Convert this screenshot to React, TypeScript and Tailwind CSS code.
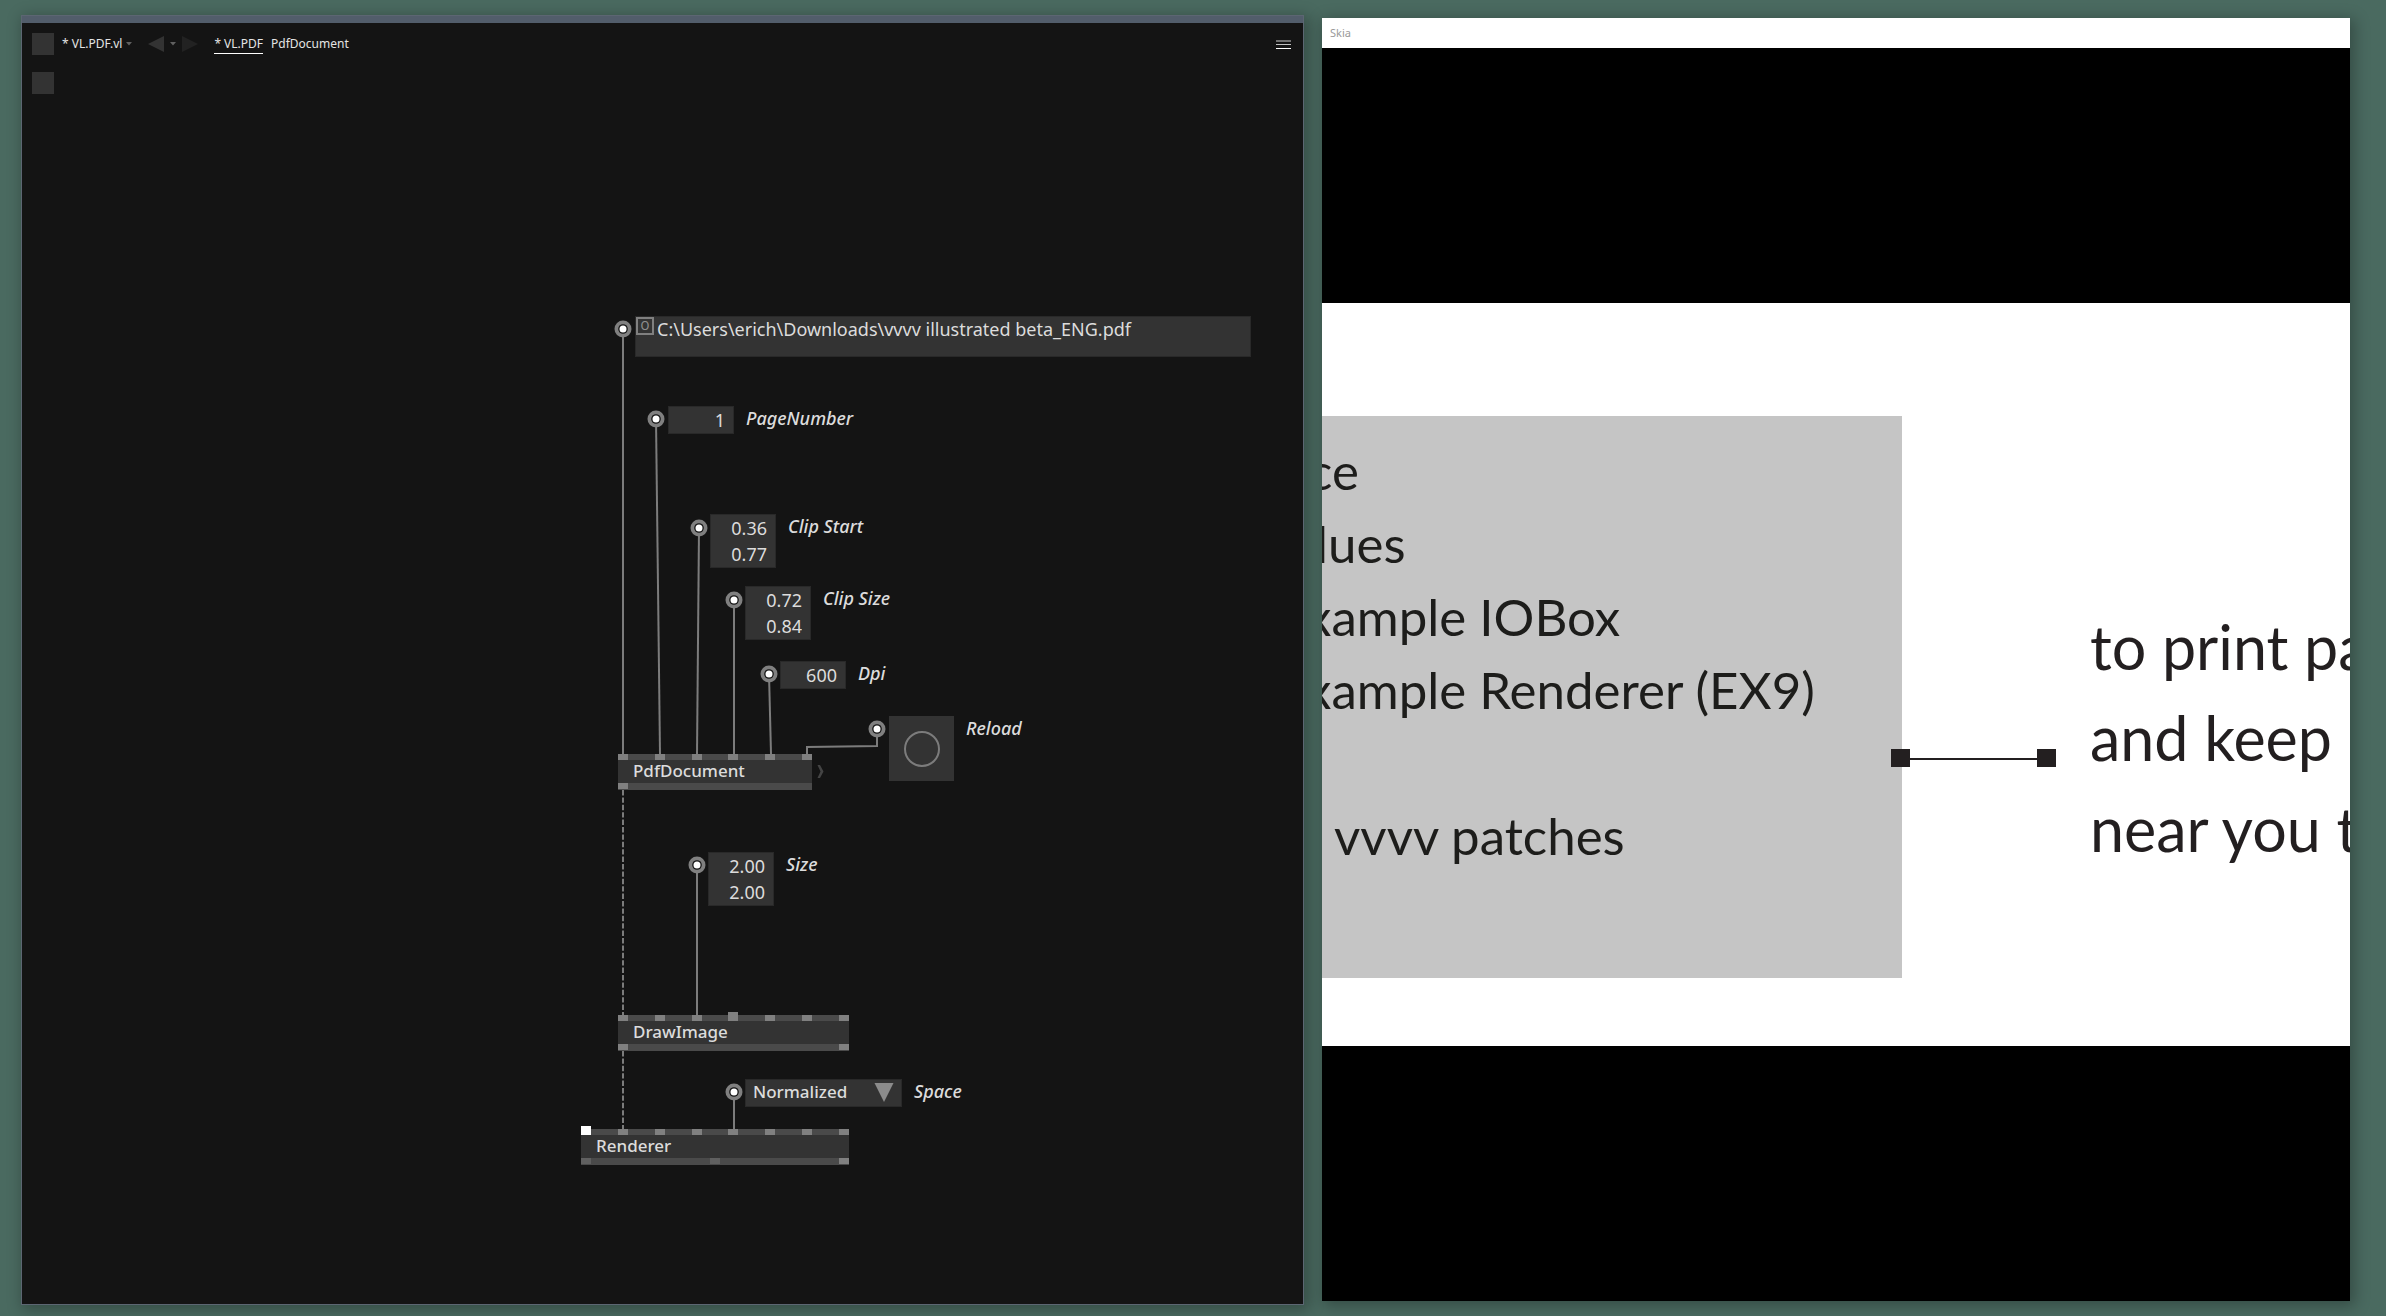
import type { ReactNode } from 'react';

type Point = { x: number; y: number };

const valueBoxes = [
  { id: 'page-number', label: 'PageNumber', x: 646, y: 306, values: ['1'] },
  { id: 'clip-start', label: 'Clip Start', x: 688, y: 414, values: ['0.36', '0.77'] },
  { id: 'clip-size', label: 'Clip Size', x: 723, y: 486, values: ['0.72', '0.84'] },
  { id: 'dpi', label: 'Dpi', x: 758, y: 561, values: ['600'] },
  { id: 'size', label: 'Size', x: 686, y: 752, values: ['2.00', '2.00'] },
];

type PinKind = 'normal' | 'raised' | 'active' | 'dim';

const nodes: { name: string; x: number; y: number; width: number; inputs: PinKind[]; outputs: PinKind[] }[] = [
  {
    name: 'PdfDocument',
    x: 596,
    y: 654,
    width: 194,
    inputs: ['normal', 'normal', 'normal', 'normal', 'normal', 'normal'],
    outputs: ['normal'],
  },
  {
    name: 'DrawImage',
    x: 596,
    y: 915,
    width: 231,
    inputs: ['normal', 'normal', 'normal', 'raised', 'normal', 'normal', 'normal'],
    outputs: ['normal', 'normal'],
  },
  {
    name: 'Renderer',
    x: 559,
    y: 1029,
    width: 268,
    inputs: ['active', 'normal', 'normal', 'normal', 'normal', 'normal', 'normal', 'normal'],
    outputs: ['dim', 'dim', 'normal'],
  },
];

const links = [
  '601,229 601,654',
  '634,319 638,654',
  '677,428 675,654',
  '712,500 712,654',
  '747,574 749,654',
  '855,629 855,646 785,647 785,654',
  '675,765 675,915',
  '712,992 712,1029',
];

const dataLinks = ['601,690 601,915', '601,951 601,1029'];

const padCenters: Point[] = [
  { x: 601, y: 229 },
  { x: 634, y: 319 },
  { x: 677, y: 428 },
  { x: 712, y: 500 },
  { x: 747, y: 574 },
  { x: 855, y: 629 },
  { x: 675, y: 765 },
  { x: 712, y: 992 },
];

const pinStyles: Record<PinKind, string> = {
  normal: 'h-1.5 w-2.5 bg-[#808080]',
  raised: 'h-[9px] w-2.5 bg-[#808080]',
  active: 'h-[9px] w-2.5 bg-white',
  dim: 'h-1.5 w-2.5 bg-[#606060]',
};

function Wires() {
  return (
    <svg className="pointer-events-none absolute inset-0 size-full" aria-hidden="true">
      <g fill="none" stroke="#7c7c7c" strokeWidth="2">
        {links.map((points) => (
          <polyline key={points} points={points} />
        ))}
        {dataLinks.map((points) => (
          <polyline key={points} points={points} strokeDasharray="5.4 2" />
        ))}
      </g>
      {padCenters.map(({ x, y }) => (
        <g key={`${x}-${y}`}>
          <circle cx={x} cy={y} r="8.5" fill="#808080" />
          <circle cx={x} cy={y} r="4.8" fill="#141414" />
          <circle cx={x} cy={y} r="3.5" fill="#ffffff" />
        </g>
      ))}
      <path d="M795.5 665H798L801.500 671.500L798 678H795.500L798.500 671.500Z" fill="#444" />
    </svg>
  );
}

function Placed({ x, y, children }: Point & { children: ReactNode }) {
  return (
    <div className="absolute flex items-start" style={{ left: x, top: y }}>
      {children}
    </div>
  );
}

function Caption({ htmlFor, children }: { htmlFor: string; children: ReactNode }) {
  return (
    <label htmlFor={htmlFor} className="ml-3 text-lg leading-[24px] font-medium whitespace-nowrap italic">
      {children}
    </label>
  );
}

function ValueBox({ id, label, x, y, values }: (typeof valueBoxes)[number]) {
  return (
    <Placed x={x} y={y}>
      <div className="flex w-[66px] flex-col border border-[#292929] bg-[#333]">
        {values.map((value, i) => (
          <input
            key={i}
            id={i === 0 ? id : `${id}-${i}`}
            aria-label={`${label} ${i + 1}`}
            defaultValue={value}
            className="h-[26px] w-full bg-transparent pr-2 text-right text-lg leading-[26px] outline-none"
          />
        ))}
      </div>
      <Caption htmlFor={id}>{label}</Caption>
    </Placed>
  );
}

function Node({ name, x, y, width, inputs, outputs }: (typeof nodes)[number]) {
  return (
    <div className="absolute bg-[#333]" style={{ left: x, top: y, width }}>
      <div className="flex h-1.5 items-end justify-between bg-[#4a4a4a]">
        {inputs.map((kind, i) => (
          <span key={i} className={pinStyles[kind]} />
        ))}
      </div>
      <div className="px-[15px] pb-0.5 text-[17px] leading-[21px] font-medium">{name}</div>
      <div className="flex h-[7px] justify-between bg-[#4a4a4a]">
        {outputs.map((kind, i) => (
          <span key={i} className={pinStyles[kind]} />
        ))}
      </div>
    </div>
  );
}

function Patch() {
  return (
    <main className="relative flex-1 overflow-hidden">
      <Wires />
      <div className="absolute top-[216px] left-[613px] flex h-[41px] w-[616px] items-start border border-[#292929] bg-[#333]">
        <button
          className="size-[18px] shrink-0 border-2 border-[#808080] text-center font-[Roboto,sans-serif] text-[13px] leading-[14px] text-[#909090]"
          aria-label="Open file"
        >
          O
        </button>
        <input
          aria-label="File path"
          defaultValue="C:\Users\erich\Downloads\vvvv illustrated beta_ENG.pdf"
          className="ml-[3px] h-[24px] flex-1 bg-transparent text-lg leading-[24px] outline-none"
        />
      </div>
      {valueBoxes.map((box) => (
        <ValueBox key={box.id} {...box} />
      ))}
      <Placed x={867} y={616}>
        <button id="reload" className="flex size-[65px] items-center justify-center bg-[#333]">
          <span className="size-9 rounded-full border-2 border-[#7c7c7c]" />
        </button>
        <Caption htmlFor="reload">Reload</Caption>
      </Placed>
      <Placed x={723} y={979}>
        <div className="relative">
          <select
            id="space"
            defaultValue="Normalized"
            className="h-7 w-[157px] appearance-none border border-[#292929] bg-[#333] pb-0.5 pl-[7px] text-[17px] leading-[24px] font-medium outline-none"
          >
            <option>Normalized</option>
          </select>
          <svg className="pointer-events-none absolute top-1 right-2 h-5 w-5" viewBox="0 0 20 20" aria-hidden="true">
            <path d="M0.500 0H19.500L10 19Z" fill="#8c8c8c" />
          </svg>
        </div>
        <Caption htmlFor="space">Space</Caption>
      </Placed>
      {nodes.map((node) => (
        <Node key={node.name} {...node} />
      ))}
    </main>
  );
}

function SmallCaret() {
  return (
    <svg className="h-1 w-1.5" viewBox="0 0 6 4" aria-hidden="true">
      <path d="M0 0H6L3 3.500Z" fill="#606060" />
    </svg>
  );
}

function EditorWindow() {
  return (
    <section className="mb-[11px] flex flex-[1281] flex-col border border-[#5c6672] bg-[#141414] text-[#dcdcdc] shadow-[3px_3px_14px_2px_rgba(0,0,0,0.28)]">
      <div className="h-[7px] bg-[#525d6b]" />
      <header className="flex h-[77px] flex-col gap-[17px] pt-2.5 pr-3 pl-2.5">
        <div className="flex h-[22px] shrink-0 items-center text-xs text-[#e4e4e4]">
          <button aria-label="Main menu" className="size-[22px] bg-[#333]" />
          <button className="ml-2 flex items-center gap-1">
            * VL.PDF.vl
            <SmallCaret />
          </button>
          <button aria-label="Back" className="ml-4">
            <svg className="h-4 w-4" viewBox="0 0 16 16" aria-hidden="true">
              <path d="M0 8L16 0V16Z" fill="#333" />
            </svg>
          </button>
          <button aria-label="History" className="ml-1.5">
            <SmallCaret />
          </button>
          <button aria-label="Forward" className="ml-1.5">
            <svg className="h-4 w-4" viewBox="0 0 16 16" aria-hidden="true">
              <path d="M16 8L0 0V16Z" fill="#222" />
            </svg>
          </button>
          <nav className="ml-4 flex gap-2">
            <a href="#vl-pdf" className="border-b border-white pt-px leading-[18px]">
              * VL.PDF
            </a>
            <a href="#pdf-document" className="pt-px leading-[18px]">
              PdfDocument
            </a>
          </nav>
          <button aria-label="Menu" className="ml-auto flex w-[15px] flex-col">
            <span className="h-0.5 w-full bg-[#707070]" />
            <span className="mt-0.5 h-px w-full bg-[#c0c0c0]" />
            <span className="mt-[3px] h-px w-full bg-white" />
          </button>
        </div>
        <button aria-label="Definitions" className="size-[22px] shrink-0 bg-[#333]" />
      </header>
      <Patch />
    </section>
  );
}

function PreviewWindow() {
  return (
    <section className="mt-[3px] mb-[15px] flex min-w-0 flex-[1028] flex-col bg-black shadow-[3px_3px_14px_2px_rgba(0,0,0,0.28)]">
      <header className="flex h-[30px] items-center bg-white px-2 text-[11px] text-[#999]">Skia</header>
      <div className="flex flex-1 flex-col justify-center">
        <article className="flex items-start overflow-hidden bg-white pt-[113px] pb-[68px] font-[Lato,sans-serif] whitespace-nowrap">
          <div className="w-[580px] shrink-0 overflow-hidden bg-[#c5c5c5] pt-[18px] pb-[106px] text-[51px] leading-[73px] text-[#1d1d1b]">
            <p className="-ml-3.5">ce</p>
            <p className="-ml-1.5">lues</p>
            <p className="-ml-4">xample IOBox</p>
            <p className="-ml-4">xample Renderer (EX9)</p>
            <p>&nbsp;</p>
            <p className="ml-3">vvvv patches</p>
          </div>
          <svg className="mt-[333px] -ml-[11px] h-[19px] w-[165px] shrink-0" viewBox="0 0 165 19" fill="#231f20" aria-hidden="true">
            <rect width="19" height="18" />
            <rect x="146" width="19" height="18" />
            <rect x="19" y="9" width="127" height="2" />
          </svg>
          <div className="mt-[185px] ml-[34px] text-[61px] leading-[91px] text-[#231f20]">
            <p>to print pa</p>
            <p>and keep</p>
            <p>near you t</p>
          </div>
        </article>
      </div>
    </section>
  );
}

export default function App() {
  return (
    <div className="flex min-h-screen gap-[18px] bg-[#4a6a60] pt-[15px] pr-9 pl-[21px] font-['Noto_Sans',sans-serif]">
      <EditorWindow />
      <PreviewWindow />
    </div>
  );
}
